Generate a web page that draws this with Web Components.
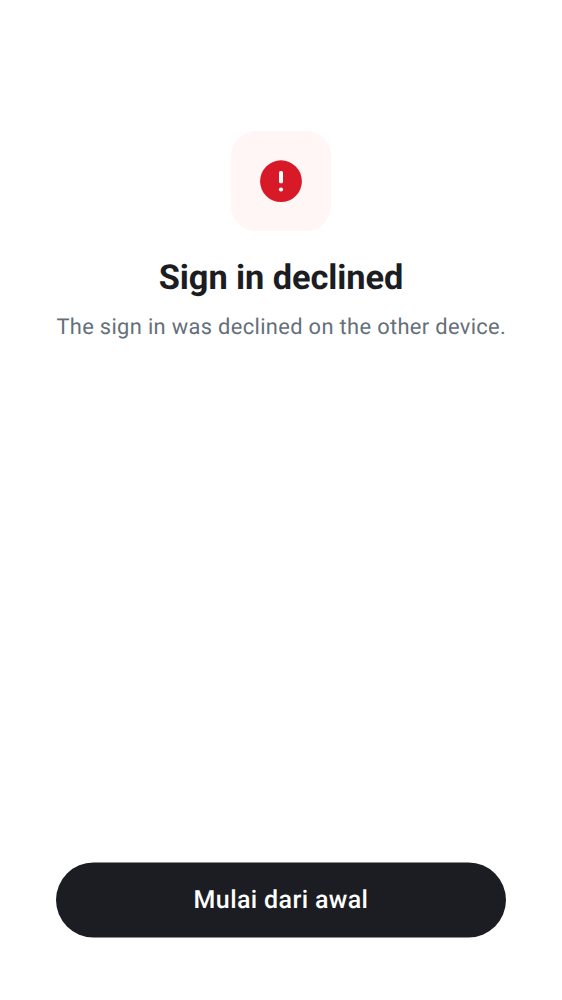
<!DOCTYPE html>
<html lang="id"><head><meta charset="utf-8"><title>Sign in</title>
<style>html,body{margin:0;height:100%;background:#fff}body{font-family:Roboto,sans-serif;text-rendering:geometricPrecision;-webkit-font-smoothing:antialiased}</style></head>
<body>
<sign-in-screen>
<status-icon slot="hero"></status-icon>
<status-message slot="hero"><span slot="title">Sign in declined</span><span slot="text">The sign in was declined on the other device.</span></status-message>
<pill-button slot="action">Mulai dari awal</pill-button>
</sign-in-screen>
<script>
const define=(name,html)=>customElements.define(name,class extends HTMLElement{
  constructor(){super();const t=document.createElement('template');t.innerHTML=html;
    this.attachShadow({mode:'open'}).append(t.content.cloneNode(true));}
});
define('sign-in-screen',`<style>
:host{display:flex;flex-direction:column;justify-content:space-between;box-sizing:border-box;height:1000px;padding:131px 56px 62px;background:#fff}
main{display:flex;flex-direction:column;align-items:center}
</style><main><slot name="hero"></slot></main><footer><slot name="action"></slot></footer>`);
define('status-icon',`<style>
:host{display:grid;place-items:center;width:100px;height:100px;border-radius:25px;background:#fff6f5}
svg{display:block}
</style><svg width="50" height="50" viewBox="0 0 50 50" aria-hidden="true"><circle cx="25" cy="25.2" r="20.9" fill="#d71928"/><rect x="23" y="15" width="4" height="12.3" rx="1.5" fill="#fff"/><circle cx="25" cy="33.5" r="2.1" fill="#fff"/></svg>`);
define('status-message',`<style>
:host{display:block;text-align:center;margin-top:25px}
h1{margin:0;font-size:34.375px;line-height:44px;font-weight:700;letter-spacing:-.08px;color:#1c1d22;white-space:nowrap}
p{margin:12px 0 0;padding-left:.5px;font-size:21.875px;line-height:32px;letter-spacing:.34px;color:#656f7a;white-space:nowrap}
</style><h1><slot name="title"></slot></h1><p><slot name="text"></slot></p>`);
define('pill-button',`<style>
:host{display:block}
button{display:grid;place-items:center;box-sizing:border-box;width:100%;height:76px;border:0;padding:0;background:none;color:#fff;font:500 25px/32px Roboto,sans-serif;letter-spacing:.38px;text-rendering:inherit}
svg,span{grid-area:1/1}
span{padding-top:2px}
svg{display:block}
</style><button type="button"><svg width="450" height="76" viewBox="0 0 450 76" aria-hidden="true"><rect y=".5" width="450" height="75" rx="37.5" fill="#1c1d22"/></svg><span><slot></slot></span></button>`);
</script></body></html>
